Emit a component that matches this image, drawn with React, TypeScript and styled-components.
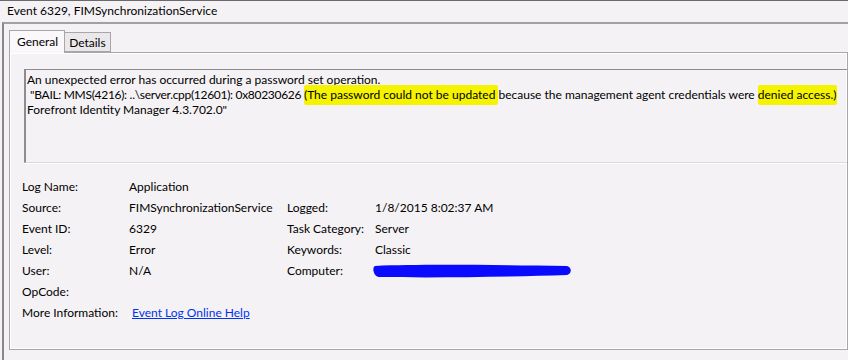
import React from 'react';
import styled, { createGlobalStyle } from 'styled-components';

const GlobalStyle = createGlobalStyle`
	html, body {
		margin: 0;
		padding: 0;
		background: #f5f2f5;
	}
	body {
		font-family: 'Segoe UI', Lato, 'Noto Sans', sans-serif;
		font-size: 12px;
		color: #000;
	}
`;

const Window = styled.div`
	width: 848px;
	height: 360px;
	overflow: hidden;
	background: #f5f2f5;
	border-top: 1px solid #6d6a6d;
	box-sizing: border-box;
`;

const TitleBar = styled.div`
	height: 21px;
	line-height: 19px;
	padding-left: 7px;
	font-size: 12px;
`;

const Frame = styled.div`
	margin-left: 2px;
	border-top: 2px solid #a3a0a3;
	border-left: 2px solid #8a878a;
	padding: 6px 0 0 5px;
	height: 340px;
	box-sizing: border-box;
`;

const TabStrip = styled.div`
	display: flex;
	align-items: flex-end;
	height: 22px;
	position: relative;
	z-index: 1;
`;

const Tab = styled.div<{ $active?: boolean }>`
	box-sizing: border-box;
	height: ${p => (p.$active ? '23px' : '20px')};
	padding: ${p => (p.$active ? '2px 6px 0 7px' : '1px 4px 0 4px')};
	margin-bottom: ${p => (p.$active ? '-1px' : '0')};
	border: 1px solid #a9a6a9;
	border-bottom: ${p => (p.$active ? 'none' : '1px solid #a9a6a9')};
	border-left: ${p => (p.$active ? '1px solid #a9a6a9' : 'none')};
	background: ${p => (p.$active ? '#faf8fa' : '#ebe8eb')};
	line-height: 17px;
`;

const TabPanel = styled.div`
	border: 1px solid #a9a6a9;
	background: #f5f2f5;
	box-shadow: inset 1px 1px 0 #ffffff, inset -1px -1px 0 #ffffff;
	padding: 16px 0 0 12px;
	height: 298px;
	box-sizing: border-box;
	overflow: hidden;
`;

const MessageBox = styled.div`
	margin-left: 2px;
	height: 94px;
	box-sizing: border-box;
	border-top: 1px solid #8f8c8f;
	border-left: 2px solid #8f8c8f;
	border-bottom: 1px solid #dcd9dc;
	box-shadow: 0 1px 0 #ffffff;
	padding: 2px 0 0 1px;
	white-space: pre;
	line-height: 15px;
	width: 900px;
`;

// the hex/code part is a touch narrower in the original font
const Code = styled.span`
	letter-spacing: -0.3px;
`;

const Highlight = styled.span`
	background: #f6f300;
	padding: 2px 0 3px;
	border-radius: 2px;
`;

const DetailsGrid = styled.div`
	margin-top: 13px;
	display: grid;
	grid-template-columns: 107px 158px 88px auto;
	grid-auto-rows: 21px;
	align-items: center;
`;

const Label = styled.div``;

const Value = styled.div`
	white-space: nowrap;
`;

const HelpLink = styled.a`
	color: #0033ee;
	text-decoration: underline;
	margin-left: 3px;
	cursor: pointer;
`;

const ScribbleSvg = styled.svg`
	display: block;
	margin-left: -4px;
	margin-top: 1px;
`;

const Scribble = () => (
	<ScribbleSvg width="204" height="18" viewBox="0 0 204 18">
		<path
			d="M4 4 C 50 2, 120 3, 196 4 C 201 5, 201 12, 196 13 C 140 15, 60 16, 8 15 C 2 14, 1 5, 4 4 Z"
			fill="#0a0aff"
		/>
	</ScribbleSvg>
);

const rows: [string, React.ReactNode, string?, React.ReactNode?][] = [
	['Log Name:', 'Application'],
	['Source:', 'FIMSynchronizationService', 'Logged:', '1/8/2015 8:02:37 AM'],
	['Event ID:', '6329', 'Task Category:', 'Server'],
	['Level:', 'Error', 'Keywords:', 'Classic'],
	['User:', 'N/A', 'Computer:', <Scribble key="pc" />],
	['OpCode:', ''],
	['More Information:', <HelpLink key="help">Event Log Online Help</HelpLink>]
];

const App: React.FC = () => {
	return (
		<>
			<GlobalStyle />
			<Window>
				<TitleBar>Event 6329, FIMSynchronizationService</TitleBar>
				<Frame>
					<TabStrip>
						<Tab $active>General</Tab>
						<Tab>Details</Tab>
					</TabStrip>
					<TabPanel>
						<MessageBox>
							{'An unexpected error has occurred during a password set operation.\n '}
							<Code>{'"BAIL: MMS(4216): ..\\server.cpp(12601): 0x80230626 '}</Code>
							<Highlight>(The password could not be updated </Highlight>
							{'because the management agent credentials were '}
							<Highlight>denied access.)</Highlight>
							{'\nForefront Identity Manager 4.3.702.0"'}
						</MessageBox>
						<DetailsGrid>
							{rows.map(([l1, v1, l2, v2], i) => (
								<React.Fragment key={i}>
									<Label>{l1}</Label>
									<Value>{v1}</Value>
									<Label>{l2 || ''}</Label>
									<Value>{v2 || ''}</Value>
								</React.Fragment>
							))}
						</DetailsGrid>
					</TabPanel>
				</Frame>
			</Window>
		</>
	);
};

export default App;
